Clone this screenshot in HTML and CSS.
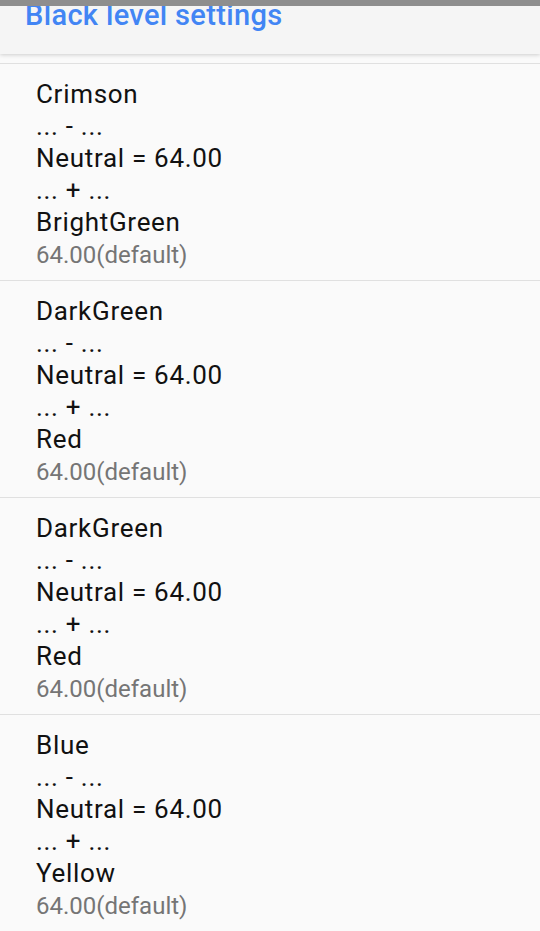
FILE: index.html
```html
<!DOCTYPE html>
<html>
<head>
<meta charset="utf-8">
<link rel="stylesheet" href="styles.css">
</head>
<body>
<div class="statusbar"></div>
<header class="appbar">
  <h1 class="title">Black level settings</h1>
</header>
<main class="list">
  <div class="item">
    <div class="item-title">Crimson<br>... - ...<br>Neutral = 64.00<br>... + ...<br>BrightGreen</div>
    <div class="item-summary">64.00(default)</div>
  </div>
  <div class="item">
    <div class="item-title">DarkGreen<br>... - ...<br>Neutral = 64.00<br>... + ...<br>Red</div>
    <div class="item-summary">64.00(default)</div>
  </div>
  <div class="item">
    <div class="item-title">DarkGreen<br>... - ...<br>Neutral = 64.00<br>... + ...<br>Red</div>
    <div class="item-summary">64.00(default)</div>
  </div>
  <div class="item">
    <div class="item-title">Blue<br>... - ...<br>Neutral = 64.00<br>... + ...<br>Yellow</div>
    <div class="item-summary">64.00(default)</div>
  </div>
</main>
</body>
</html>
```

FILE: styles.css
```css
html, body {
  margin: 0;
  padding: 0;
}
body {
  background: #fafafa;
  font-family: Roboto, "Noto Sans", sans-serif;
  overflow: hidden;
  height: 931px;
}
.statusbar {
  position: absolute;
  top: 0;
  left: 0;
  right: 0;
  height: 6px;
  background: #8e8e8e;
  z-index: 2;
}
.appbar {
  height: 54px;
  background: #f5f5f5;
  box-shadow: 0 1px 4px rgba(0, 0, 0, 0.18);
  position: relative;
  z-index: 1;
}
.title {
  margin: 0;
  padding: 1px 0 0 25px;
  font-size: 29px;
  line-height: 29px;
  letter-spacing: 0.35px;
  font-weight: 500;
  color: #4285f4;
}
.list {
  padding-top: 9px;
}
.item {
  border-top: 1px solid #e0e0e0;
  padding: 14px 0 10px 36px;
}
.item-title {
  font-size: 26px;
  line-height: 32px;
  letter-spacing: 0.7px;
  color: #111;
}
.item-summary {
  margin-top: 2px;
  font-size: 24px;
  line-height: 30px;
  color: #757575;
}
```
